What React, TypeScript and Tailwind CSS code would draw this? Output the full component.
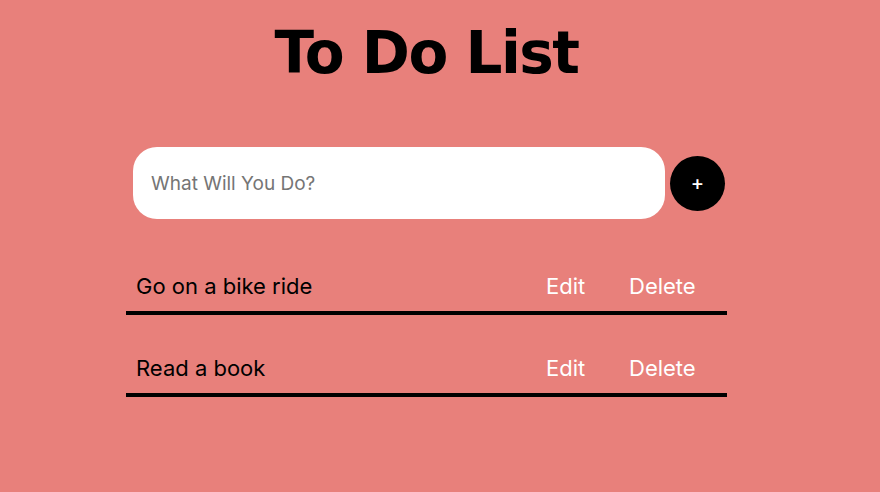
import React from 'react';

const todos = ['Go on a bike ride', 'Read a book'];

const App: React.FC = () => {
  return (
    <div className="min-h-[492px] w-full bg-[#e8807b] font-['Inter',sans-serif]">
      <div className="ml-[126px] w-[601px] pt-[13px]">
        <h1 className="text-center font-['DejaVu_Sans',sans-serif] text-[58px] font-bold leading-[80px] tracking-[-1.5px] text-black">
          To Do List
        </h1>

        <div className="mt-[54px] flex items-center pl-[7px]">
          <input
            type="text"
            placeholder="What Will You Do?"
            className="h-[72px] w-[532px] rounded-[24px] bg-white px-[18px] text-[19px] text-black outline-none placeholder:text-[#757575]"
          />
          <button className="ml-[5px] flex h-[55px] w-[55px] items-center justify-center rounded-full bg-black text-[20px] font-medium text-white">
            +
          </button>
        </div>

        <ul className="mt-[48px]">
          {todos.map((t) => (
            <li key={t} className="mb-[34px] flex h-[48px] items-center border-b-4 border-black pl-[10px] pb-[6px] text-[22px]">
              <span className="flex-1 text-black">{t}</span>
              <span className="w-[83px] text-white">Edit</span>
              <span className="w-[98px] text-white">Delete</span>
            </li>
          ))}
        </ul>
      </div>
    </div>
  );
};

export default App;
